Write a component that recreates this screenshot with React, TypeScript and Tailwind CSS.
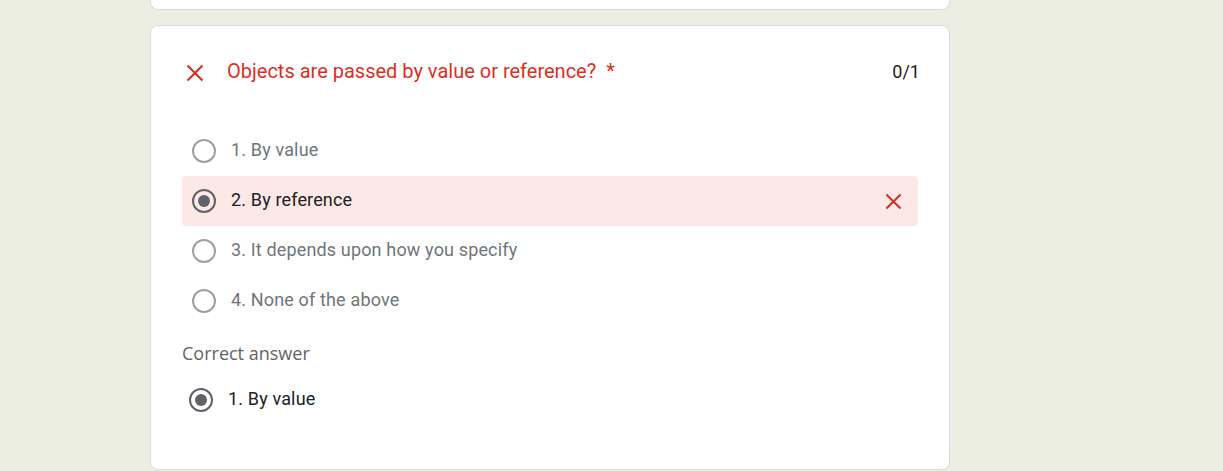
import React from 'react';

const options = ['1. By value', '2. By reference', '3. It depends upon how you specify', '4. None of the above'];
const chosen = 1;

function Radio({ checked, muted }: { checked?: boolean; muted?: boolean }) {
  return (
    <span
      className={`flex h-[24px] w-[24px] shrink-0 items-center justify-center rounded-full border-2 ${
        muted ? 'border-[#9aa0a6]' : 'border-[#5f6368]'
      }`}
    >
      {checked && <span className="h-[12px] w-[12px] rounded-full bg-[#5f6368]" />}
    </span>
  );
}

function Cross({ size = 18 }: { size?: number }) {
  return (
    <svg width={size} height={size} viewBox="0 0 18 18" fill="none">
      <path d="M1.5 1.5L16.5 16.5M16.5 1.5L1.5 16.5" stroke="#d93025" strokeWidth="2.2" />
    </svg>
  );
}

export default function App() {
  return (
    <div className="min-h-[471px] w-full bg-[#ebeee0] font-['Roboto',sans-serif]">
      <div className="ml-[150px] w-[800px]">
        {/* tail of previous card */}
        <div className="h-[10px] rounded-b-[8px] border border-t-0 border-[#dadce0] bg-white" />

        <div className="mt-[15px] h-[445px] rounded-[8px] border border-[#dadce0] bg-white px-[31px] pt-[25px]">
          {/* question header */}
          <div className="flex h-[40px] items-center">
            <span className="ml-[4px] mr-[23px] mt-[3px] flex w-[18px] justify-center">
              <Cross size={18} />
            </span>
            <span className="text-[20px] text-[#d93025]">Objects are passed by value or reference?</span>
            <span className="ml-[10px] text-[20px] text-[#d93025]">*</span>
            <span className="-mr-[2px] ml-auto text-[18px] text-[#202124]">0/1</span>
          </div>

          {/* options */}
          <div className="mt-[35px]">
            {options.map((o, i) => (
              <div
                key={o}
                className={`flex h-[50px] items-center rounded-[4px] pl-[10px] pr-[16px] ${
                  i === chosen ? 'bg-[#fce8e6]' : ''
                }`}
              >
                <Radio checked={i === chosen} muted={i !== chosen} />
                <span
                  className={`ml-[15px] pb-[3px] text-[18px] tracking-[0.15px] ${
                    i === chosen ? 'text-[#202124]' : 'text-[#70757a]'
                  }`}
                >
                  {o}
                </span>
                {i === chosen && (
                  <span className="ml-auto">
                    <Cross size={17} />
                  </span>
                )}
              </div>
            ))}
          </div>

          {/* correct answer */}
          <div className="mt-[14px] font-['Open_Sans',sans-serif] text-[18px] font-medium text-[#5f6368]">
            Correct answer
          </div>
          <div className="mt-[18px] flex items-center pl-[7px]">
            <Radio checked />
            <span className="ml-[15px] pb-[3px] text-[18px] tracking-[0.15px] text-[#202124]">1. By value</span>
          </div>
        </div>
      </div>
    </div>
  );
}
